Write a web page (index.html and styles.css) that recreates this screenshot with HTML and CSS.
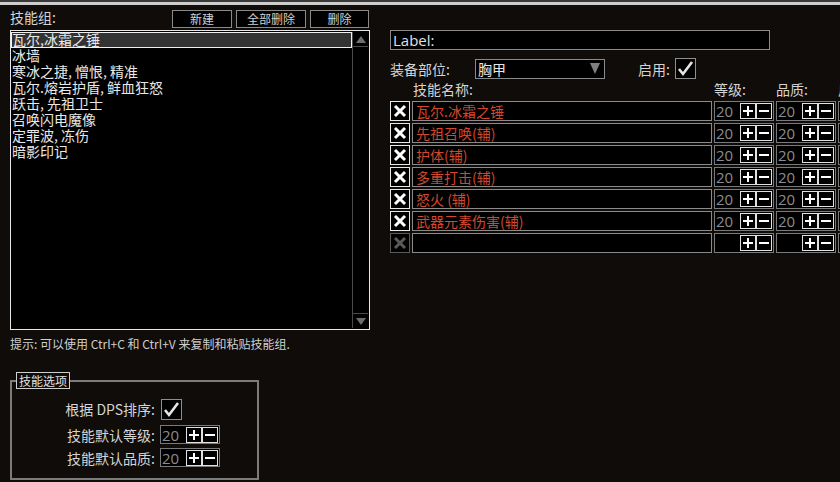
FILE: index.html
```html
<!DOCTYPE html>
<html lang="zh-CN">
<head>
    <meta charset="UTF-8">
    <title>技能组</title>
    <link rel="stylesheet" href="styles.css">
</head>
<body>
    <div class="topbar"></div>
    <div class="main">
        <div class="left">
            <div class="left-head">
                <span class="caption">技能组:</span>
                <div class="btns">
                    <div class="btn w60">新建</div>
                    <div class="btn w70">全部删除</div>
                    <div class="btn w59">删除</div>
                </div>
            </div>
            <div class="list">
                <ul class="items">
                    <li class="sel">瓦尔,冰霜之锤</li>
                    <li>冰墙</li>
                    <li>寒冰之捷, 憎恨, 精准</li>
                    <li>瓦尔.熔岩护盾, 鲜血狂怒</li>
                    <li>跃击, 先祖卫士</li>
                    <li>召唤闪电魔像</li>
                    <li>定罪波, 冻伤</li>
                    <li>暗影印记</li>
                </ul>
                <div class="scroll">
                    <div class="arr up"></div>
                    <div class="track"></div>
                    <div class="arr down"></div>
                </div>
            </div>
            <p class="hint">提示: 可以使用 Ctrl+C 和 Ctrl+V 来复制和粘贴技能组.</p>
            <fieldset class="opts">
                <legend>技能选项</legend>
                <div class="opt r1">
                    <span class="opt-label">根据 DPS排序:</span>
                    <div class="check"><svg width="19" height="19" viewBox="0 0 19 19"><path d="M3 10 L7 15 L16 3" fill="none" stroke="#e6e6e6" stroke-width="2.6"/></svg></div>
                </div>
                <div class="opt r2">
                    <span class="opt-label">技能默认等级:</span>
                    <div class="spin small"><span class="num">20</span><span class="pb plus"></span><span class="pb minus"></span></div>
                </div>
                <div class="opt r3">
                    <span class="opt-label">技能默认品质:</span>
                    <div class="spin small"><span class="num">20</span><span class="pb plus"></span><span class="pb minus"></span></div>
                </div>
            </fieldset>
        </div>

        <div class="right">
            <div class="label-input">Label:</div>
            <div class="equip">
                <span class="equip-label">装备部位:</span>
                <div class="select"><span>胸甲</span><span class="tri"></span></div>
                <span class="on-label">启用:</span>
                <div class="check"><svg width="19" height="19" viewBox="0 0 19 19"><path d="M3 10 L7 15 L16 3" fill="none" stroke="#e6e6e6" stroke-width="2.6"/></svg></div>
            </div>
            <div class="gems">
                <span></span><span class="hd">技能名称:</span><span class="hd">等级:</span><span class="hd">品质:</span><span class="hd">启用:</span>

                <div class="x"><svg width="14" height="14" viewBox="0 0 14 14"><path d="M2 2 L12 12 M12 2 L2 12" stroke="#fff" stroke-width="3"/></svg></div>
                <div class="name">瓦尔.冰霜之锤</div>
                <div class="spin"><span class="num">20</span><span class="pb plus"></span><span class="pb minus"></span></div>
                <div class="spin"><span class="num">20</span><span class="pb plus"></span><span class="pb minus"></span></div>
                <div class="spin"></div>

                <div class="x"><svg width="14" height="14" viewBox="0 0 14 14"><path d="M2 2 L12 12 M12 2 L2 12" stroke="#fff" stroke-width="3"/></svg></div>
                <div class="name">先祖召唤(辅)</div>
                <div class="spin"><span class="num">20</span><span class="pb plus"></span><span class="pb minus"></span></div>
                <div class="spin"><span class="num">20</span><span class="pb plus"></span><span class="pb minus"></span></div>
                <div class="spin"></div>

                <div class="x"><svg width="14" height="14" viewBox="0 0 14 14"><path d="M2 2 L12 12 M12 2 L2 12" stroke="#fff" stroke-width="3"/></svg></div>
                <div class="name">护体(辅)</div>
                <div class="spin"><span class="num">20</span><span class="pb plus"></span><span class="pb minus"></span></div>
                <div class="spin"><span class="num">20</span><span class="pb plus"></span><span class="pb minus"></span></div>
                <div class="spin"></div>

                <div class="x"><svg width="14" height="14" viewBox="0 0 14 14"><path d="M2 2 L12 12 M12 2 L2 12" stroke="#fff" stroke-width="3"/></svg></div>
                <div class="name">多重打击(辅)</div>
                <div class="spin"><span class="num">20</span><span class="pb plus"></span><span class="pb minus"></span></div>
                <div class="spin"><span class="num">20</span><span class="pb plus"></span><span class="pb minus"></span></div>
                <div class="spin"></div>

                <div class="x"><svg width="14" height="14" viewBox="0 0 14 14"><path d="M2 2 L12 12 M12 2 L2 12" stroke="#fff" stroke-width="3"/></svg></div>
                <div class="name">怒火 (辅)</div>
                <div class="spin"><span class="num">20</span><span class="pb plus"></span><span class="pb minus"></span></div>
                <div class="spin"><span class="num">20</span><span class="pb plus"></span><span class="pb minus"></span></div>
                <div class="spin"></div>

                <div class="x"><svg width="14" height="14" viewBox="0 0 14 14"><path d="M2 2 L12 12 M12 2 L2 12" stroke="#fff" stroke-width="3"/></svg></div>
                <div class="name">武器元素伤害(辅)</div>
                <div class="spin"><span class="num">20</span><span class="pb plus"></span><span class="pb minus"></span></div>
                <div class="spin"><span class="num">20</span><span class="pb plus"></span><span class="pb minus"></span></div>
                <div class="spin"></div>

                <div class="x off"><svg width="14" height="14" viewBox="0 0 14 14"><path d="M2 2 L12 12 M12 2 L2 12" stroke="#5a5a5a" stroke-width="3"/></svg></div>
                <div class="name"></div>
                <div class="spin"><span class="pb plus"></span><span class="pb minus"></span></div>
                <div class="spin"><span class="pb plus"></span><span class="pb minus"></span></div>
                <div class="spin"></div>
            </div>
        </div>
    </div>
</body>
</html>
```

FILE: styles.css
```css
body{
    margin:0;
    width:840px;
    height:482px;
    overflow:hidden;
    background:#0f0c0a;
    color:#d4d4d4;
    font-family:"Noto Sans CJK SC", "Liberation Sans", sans-serif;
    font-size:14px;
}
.topbar{
    height:3px;
    border-top:2px solid #3a3a3a;
    background:#cdcdcd;
}
.main{
    display:flex;
    padding-left:10px;
}
.left{
    width:360px;
    flex-shrink:0;
}
.left-head{
    display:flex;
    align-items:center;
    height:18px;
    margin:5px 0 2px;
}
.caption{
    font-size:14px;
    line-height:18px;
    margin-top:-4px;
}
.btns{
    display:flex;
    margin-left:auto;
    gap:4px;
    margin-right:1px;
}
.btn{
    box-sizing:border-box;
    height:18px;
    border:1px solid #8a8a8a;
    background:#000;
    color:#d0d0d0;
    font-size:12px;
    line-height:16px;
    text-align:center;
}
.w60{ width:60px; }
.w70{ width:70px; }
.w59{ width:59px; }

.list{
    box-sizing:border-box;
    height:300px;
    border:1px solid #e6e6e6;
    background:#000;
    display:flex;
}
.items{
    list-style:none;
    margin:0;
    padding:1px 0 0;
    flex:1;
}
.items li{
    box-sizing:border-box;
    height:16px;
    line-height:15px;
    padding-left:1px;
    font-size:14px;
    color:#e8e8e8;
    white-space:nowrap;
}
.items .sel{
    background:#333;
    border:1px solid #f0f0f0;
    padding-left:0;
    line-height:13px;
}
.scroll{
    width:15px;
    margin:1px 1px 1px 0;
    border-left:1px solid #4a4a4a;
    display:flex;
    flex-direction:column;
}
.track{ flex:1; }
.arr{
    height:14px;
    position:relative;
}
.up{ border-bottom:1px solid #4a4a4a; }
.down{ border-top:1px solid #4a4a4a; }
.arr::before{
    content:"";
    position:absolute;
    left:3px;
    top:4px;
    border-left:5px solid transparent;
    border-right:5px solid transparent;
}
.up::before{ border-bottom:7px solid #6e6e6e; }
.down::before{ border-top:7px solid #6e6e6e; }

.hint{
    margin:7px 0 0;
    font-size:12px;
    line-height:14px;
    color:#cfcfcf;
}
.opts{
    box-sizing:border-box;
    width:249px;
    margin:21px 0 0;
    padding:0 0 11px;
    border:2px solid #7c7c7c;
}
.opts legend{
    margin-left:4px;
    padding:0 2px;
    border:1px solid #cfcfcf;
    font-size:12px;
    line-height:15px;
    color:#e0e0e0;
}
.opt{
    display:flex;
    align-items:center;
    height:20px;
}
.r1{ margin-top:10px; }
.r2{ margin-top:6px; height:19px; }
.r3{ margin-top:4px; height:19px; }
.opt-label{
    width:143px;
    text-align:right;
    margin-right:5px;
    white-space:nowrap;
}
.check{
    box-sizing:border-box;
    width:21px;
    height:21px;
    border:1px solid #8e8e8e;
    background:#000;
    display:flex;
    align-items:center;
    justify-content:center;
}
.opt .check{ margin-left:1px; }

.right{
    margin-left:20px;
    width:470px;
    flex-shrink:0;
}
.label-input{
    box-sizing:border-box;
    width:380px;
    height:20px;
    margin-top:25px;
    border:1px solid #8a8a8a;
    background:#000;
    padding-left:2px;
    font-family:"Open Sans", "Liberation Sans", sans-serif;
    font-size:15px;
    line-height:18px;
    color:#e0e0e0;
}
.equip{
    display:flex;
    align-items:center;
    height:21px;
    margin-top:8px;
}
.equip-label{ width:85px; }
.select{
    box-sizing:border-box;
    width:130px;
    height:20px;
    border:1px solid #8a8a8a;
    background:#000;
    display:flex;
    align-items:center;
    padding:0 4px 0 2px;
    color:#e6e6e6;
}
.tri{
    margin-left:auto;
    border-left:5px solid transparent;
    border-right:5px solid transparent;
    border-top:11px solid #808080;
}
.on-label{ margin-left:33px; width:37px; }

.gems{
    display:grid;
    grid-template-columns:20px 300px 60px 60px 60px;
    grid-template-rows:18px;
    grid-auto-rows:20px;
    gap:2px;
    margin-top:2px;
}
.hd{
    line-height:16px;
    align-self:start;
}
.gems .hd:nth-child(2){ padding-left:1px; }
.x{
    box-sizing:border-box;
    border:1px solid #e8e8e8;
    background:#000;
    display:flex;
    align-items:center;
    justify-content:center;
}
.x.off{ border-color:#5a5a5a; }
.name{
    box-sizing:border-box;
    border:1px solid #8a8a8a;
    background:#000;
    padding-left:3px;
    font-size:14px;
    line-height:18px;
    color:#d4472c;
}
.spin{
    box-sizing:border-box;
    border:1px solid #7a7a7a;
    background:#000;
    display:flex;
    align-items:center;
    padding-right:1px;
}
.spin.small{
    width:60px;
    height:19px;
}
.num{
    font-family:"Open Sans", "Liberation Sans", sans-serif;
    font-size:15px;
    color:#8c8c8c;
    padding-left:1px;
    line-height:16px;
}
.pb{
    box-sizing:border-box;
    position:relative;
    width:16px;
    height:16px;
    border:1px solid #e0e0e0;
}
.plus{ margin-left:auto; }
.pb::before,
.plus::after{
    content:"";
    position:absolute;
    background:#fff;
}
.pb::before{
    left:2px;
    top:6px;
    width:10px;
    height:2px;
}
.plus::after{
    left:6px;
    top:2px;
    width:2px;
    height:10px;
}
```
